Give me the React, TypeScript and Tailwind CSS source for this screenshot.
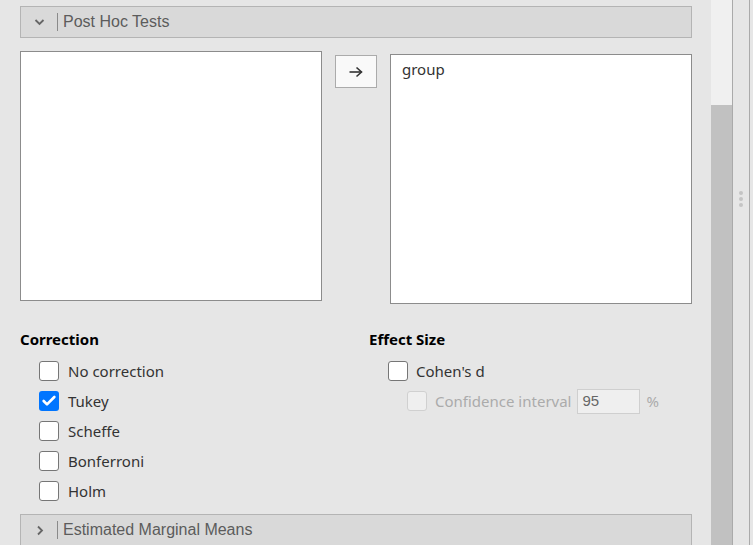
import { Check } from 'lucide-react';

const corrections = [
  { label: 'No correction', checked: false },
  { label: 'Tukey', checked: true },
  { label: 'Scheffe', checked: false },
  { label: 'Bonferroni', checked: false },
  { label: 'Holm', checked: false },
];

function Box({ checked, disabled }: { checked?: boolean; disabled?: boolean }) {
  if (checked) {
    return (
      <span className="w-[20px] h-[20px] rounded-[3px] bg-[#0075ff] flex items-center justify-center shrink-0">
        <Check size={16} strokeWidth={4} className="text-white" />
      </span>
    );
  }
  return (
    <span
      className={`w-[20px] h-[20px] rounded-[3px] border shrink-0 ${
        disabled ? 'border-[#d0d0d0] bg-[#efefef]' : 'border-[#767676] bg-white'
      }`}
    />
  );
}

function SectionHeader({ title, open }: { title: string; open?: boolean }) {
  return (
    <div className="h-[32px] bg-[#d9d9d9] border border-[#b4b4b4] flex items-center shrink-0">
      <span className="w-[36px] flex justify-center pl-[1px]">
        {open ? (
          <svg width="11" height="8" viewBox="0 0 11 8">
            <polyline points="1.5,2 5.5,6 9.5,2" fill="none" stroke="#666" strokeWidth="1.8" />
          </svg>
        ) : (
          <svg width="8" height="11" viewBox="0 0 8 11">
            <polyline points="2,1.5 6,5.5 2,9.5" fill="none" stroke="#666" strokeWidth="1.8" />
          </svg>
        )}
      </span>
      <span className="w-px h-[18px] bg-[#8a8a8a]" />
      <span className="pl-[5px] text-[16px] text-[#5c5c5c] font-['Liberation_Sans',Arial,sans-serif]">{title}</span>
    </div>
  );
}

export default function App() {
  return (
    <div className="w-[756px] h-[545px] overflow-hidden flex bg-white font-['Noto_Sans',sans-serif] text-[15px] text-[#333]">
      {/* Options panel */}
      <div className="w-[711px] bg-[#e6e6e6] pl-[20px] pr-[19px] pt-[6px] flex flex-col">
        <SectionHeader title="Post Hoc Tests" open />

        <div className="flex items-start mt-[13px]">
          <div className="w-[302px] h-[250px] bg-white border border-[#8c8c8c]" />
          <button className="ml-[13px] mt-[4px] w-[42px] h-[33px] bg-[#f9f9f9] border border-[#ababab] flex items-center justify-center">
            <svg width="16" height="12" viewBox="0 0 16 12">
              <line x1="1.5" y1="6" x2="13.5" y2="6" stroke="#333" strokeWidth="1.6" />
              <polyline points="8.5,1.5 13.5,6 8.5,10.5" fill="none" stroke="#333" strokeWidth="1.6" />
            </svg>
          </button>
          <div className="ml-[13px] mt-[3px] w-[302px] h-[250px] bg-white border border-[#8c8c8c] px-[11px] pt-[3px]">
            <div className="leading-[22px]">group</div>
          </div>
        </div>

        <div className="flex mt-[25px]">
          <div className="w-[349px]">
            <div className="font-bold leading-[20px] text-black">Correction</div>
            <div className="mt-[7px] pl-[19px]">
              {corrections.map((c) => (
                <div key={c.label} className="h-[30px] flex items-center gap-[9px]">
                  <Box checked={c.checked} />
                  <span>{c.label}</span>
                </div>
              ))}
            </div>
          </div>
          <div>
            <div className="font-bold leading-[20px] text-black">Effect Size</div>
            <div className="mt-[7px] pl-[19px]">
              <div className="h-[30px] flex items-center gap-[8px]">
                <Box />
                <span>Cohen's d</span>
              </div>
              <div className="h-[30px] flex items-center gap-[8px] pl-[19px]">
                <Box disabled />
                <span className="text-[#ababab]">Confidence interval</span>
                <span className="ml-[-3px] w-[63px] h-[25px] bg-[#efefef] border border-[#cfcfcf] pl-[5px] flex items-center text-[15px] text-[#666] font-['Liberation_Sans',Arial,sans-serif]">
                  95
                </span>
                <span className="ml-[-1px] text-[#ababab]">%</span>
              </div>
            </div>
          </div>
        </div>

        <div className="mt-[8px]">
          <SectionHeader title="Estimated Marginal Means" />
        </div>
      </div>

      {/* Scrollbar */}
      <div className="w-[21px] bg-[#f0f0f0] flex justify-center pt-[105px]">
        <div className="w-[17px] flex-1 bg-[#c1c1c1]" />
      </div>

      {/* Splitter */}
      <div className="w-[16px] bg-[#e6e6e6] border-l border-r border-[#aaaaaa] flex flex-col items-center pt-[191px] gap-[2px] box-content">
        <span className="w-[4px] h-[4px] rounded-full bg-[#c4c4c4]" />
        <span className="w-[4px] h-[4px] rounded-full bg-[#c4c4c4]" />
        <span className="w-[4px] h-[4px] rounded-full bg-[#c4c4c4]" />
      </div>
      <div className="w-[3px] bg-[#e6e6e6]" />
    </div>
  );
}
